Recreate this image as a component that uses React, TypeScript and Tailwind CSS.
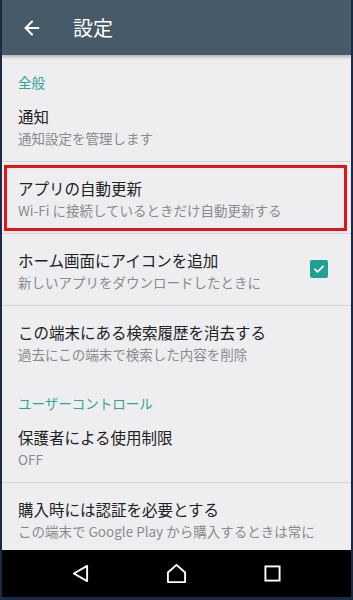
import { ArrowLeft } from "lucide-react";

const font = { fontFamily: '"Noto Sans CJK JP", "Noto Sans", sans-serif' };

interface PrefItemProps {
  title: string;
  summary: string;
  divider?: boolean;
  checked?: boolean;
  highlight?: boolean;
}

function PrefItem({ title, summary, divider = true, checked, highlight }: PrefItemProps) {
  return (
    <div
      className={`relative flex h-[72px] shrink-0 items-start pl-[16px] pr-[23px] pt-[16px] ${
        divider ? "border-b border-[#d6d6d8]" : ""
      }`}
    >
      <div className="flex-1 min-w-0">
        <div className="text-[15.5px] leading-[20px] text-[#222222] whitespace-nowrap">{title}</div>
        <div className="mt-[2px] text-[13.5px] leading-[20px] text-[#8a8a8c] whitespace-nowrap">{summary}</div>
      </div>
      {checked && (
        <div className="mt-[10px] flex h-[18px] w-[18px] items-center justify-center rounded-[2px] bg-[#1fa093]">
          <svg viewBox="0 0 24 24" className="h-[14px] w-[14px]" fill="none" stroke="white" strokeWidth="3" strokeLinecap="round" strokeLinejoin="round">
            <path d="M5 12.5l4.5 4.5L19 7.5" />
          </svg>
        </div>
      )}
      {highlight && (
        <div className="absolute left-[2px] right-[4px] top-[3px] bottom-[2px] border-[3px] border-[#e0141a]" />
      )}
    </div>
  );
}

function Category({ label, className }: { label: string; className: string }) {
  return (
    <div className={`shrink-0 pl-[16px] text-[13.5px] leading-[16px] text-[#2fa597] ${className}`}>{label}</div>
  );
}

export default function App() {
  return (
    <div
      className="flex h-[600px] w-[353px] flex-col border-l-2 border-r-2 border-b-[3px] border-[#1b2a47] bg-[#1b2a47] overflow-hidden"
      style={font}
    >
      <div className="relative z-10 flex h-[55px] shrink-0 items-center bg-[#475a67] shadow-[0_2px_3px_rgba(0,0,0,0.25)]">
        <ArrowLeft className="ml-[19px] h-[22px] w-[22px] text-white" strokeWidth={2.2} />
        <div className="ml-[30px] text-[20px] leading-none text-white">設定</div>
      </div>
      <div className="flex flex-1 flex-col overflow-hidden bg-[#eeeef0]">
        <Category label="全般" className="h-[35px] pt-[19px]" />
        <PrefItem title="通知" summary="通知設定を管理します" />
        <PrefItem title="アプリの自動更新" summary="Wi-Fi に接続しているときだけ自動更新する" highlight />
        <PrefItem title="ホーム画面にアイコンを追加" summary="新しいアプリをダウンロードしたときに" checked />
        <PrefItem title="この端末にある検索履歴を消去する" summary="過去にこの端末で検索した内容を削除" divider={false} />
        <Category label="ユーザーコントロール" className="h-[33px] pt-[17px]" />
        <PrefItem title="保護者による使用制限" summary="OFF" />
        <PrefItem title="購入時には認証を必要とする" summary="この端末で Google Play から購入するときは常に" divider={false} />
      </div>
      <div className="flex h-[47px] shrink-0 items-center bg-black pl-[30px]">
        <div className="flex w-[96px] justify-center">
          <svg viewBox="0 0 18 20" className="h-[19px] w-[17px]" fill="none" stroke="white" strokeWidth="2" strokeLinejoin="round">
            <path d="M16 2L2 10l14 8z" />
          </svg>
        </div>
        <div className="flex w-[96px] justify-center">
          <svg viewBox="0 0 22 22" className="h-[21px] w-[21px]" fill="none" stroke="white" strokeWidth="2" strokeLinejoin="round">
            <path d="M2 10L11 2l9 8v10H2z" />
          </svg>
        </div>
        <div className="flex w-[96px] justify-center">
          <svg viewBox="0 0 18 18" className="h-[17px] w-[17px]" fill="none" stroke="white" strokeWidth="2">
            <rect x="1.5" y="1.5" width="15" height="15" />
          </svg>
        </div>
      </div>
    </div>
  );
}
